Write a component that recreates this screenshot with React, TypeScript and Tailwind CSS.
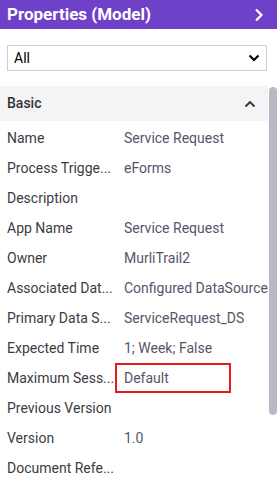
import React from "react";

const rows: { label: string; value?: string; boxed?: boolean }[] = [
  { label: "Name", value: "Service Request" },
  { label: "Process Trigge...", value: "eForms" },
  { label: "Description" },
  { label: "App Name", value: "Service Request" },
  { label: "Owner", value: "MurliTrail2" },
  { label: "Associated Dat...", value: "Configured DataSource" },
  { label: "Primary Data S...", value: "ServiceRequest_DS" },
  { label: "Expected Time", value: "1; Week; False" },
  { label: "Maximum Sess...", value: "Default", boxed: true },
  { label: "Previous Version" },
  { label: "Version", value: "1.0" },
  { label: "Document Refe..." },
];

export default function App() {
  return (
    <div
      className="w-[279px] h-[484px] overflow-hidden bg-white flex flex-col"
      style={{ fontFamily: "Roboto, 'Liberation Sans', sans-serif" }}
    >
      {/* title bar */}
      <div className="h-[29px] w-[277px] shrink-0 bg-[#6f40c8] flex items-center justify-between pl-[7px] pr-[13px]">
        <span className="text-white font-bold text-[17px] leading-none">Properties (Model)</span>
        <svg width="10" height="14" viewBox="0 0 10 14" fill="none">
          <path d="M2 1.5 L7.5 7 L2 12.5" stroke="white" strokeWidth="2.2" />
        </svg>
      </div>

      {/* filter */}
      <div className="pt-[16px] pb-[15px] pl-[7px] pr-[12px]">
        <div className="h-[26px] border border-[#cfcfcf] flex items-center justify-between pl-[6px] pr-[6px]">
          <span className="text-[14px] text-black">All</span>
          <svg width="12" height="8" viewBox="0 0 12 8" fill="none">
            <path d="M1.5 1.5 L6 6 L10.5 1.5" stroke="black" strokeWidth="2.2" />
          </svg>
        </div>
      </div>

      {/* properties list with scrollbar */}
      <div className="flex flex-1 min-h-0">
        <div className="w-[268px] shrink-0">
          <div className="h-[35px] bg-[#f4f4f6] flex items-center justify-between pl-[7px] pr-[12px]">
            <span className="text-[14px] font-medium text-[#333]">Basic</span>
            <svg width="12" height="8" viewBox="0 0 12 8" fill="none">
              <path d="M1.5 6.5 L6 2 L10.5 6.5" stroke="#333" strokeWidth="1.8" />
            </svg>
          </div>
          <div className="pt-[2px]">
            {rows.map((r) => (
              <div key={r.label} className="h-[30px] flex items-center text-[14px]">
                <span className="w-[117px] shrink-0 pl-[7px] text-[#3c3c44] whitespace-nowrap">{r.label}</span>
                {r.boxed ? (
                  <span className="ml-[-2px] w-[116px] h-[30px] border-2 border-[#e31b1b] flex items-center pl-[7px] text-[#55556a]">
                    {r.value}
                  </span>
                ) : (
                  <span className="pl-[7px] text-[#55556a] whitespace-nowrap">{r.value}</span>
                )}
              </div>
            ))}
          </div>
        </div>
        <div className="w-[11px] shrink-0 pt-[1px] pl-[1px]">
          <div className="w-[8px] h-[328px] rounded-full bg-[#b5bac4]" />
        </div>
      </div>
    </div>
  );
}
